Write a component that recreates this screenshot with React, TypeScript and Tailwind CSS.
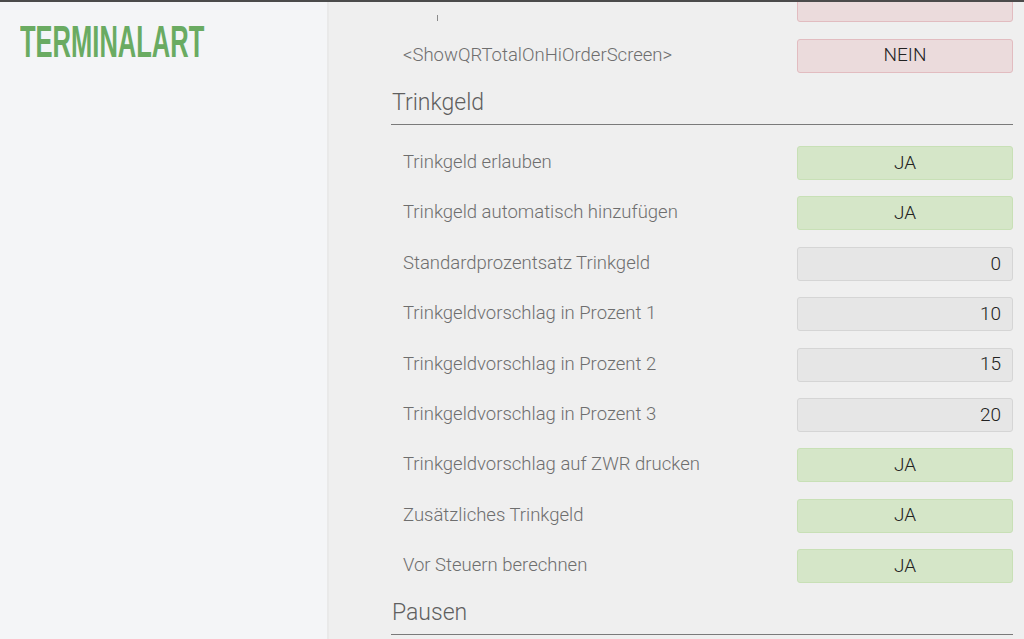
import React from "react";

type Row = { label: string; value: string; kind: "yes" | "no" | "num" };

const tipRows: Row[] = [
  { label: "Trinkgeld erlauben", value: "JA", kind: "yes" },
  { label: "Trinkgeld automatisch hinzufügen", value: "JA", kind: "yes" },
  { label: "Standardprozentsatz Trinkgeld", value: "0", kind: "num" },
  { label: "Trinkgeldvorschlag in Prozent 1", value: "10", kind: "num" },
  { label: "Trinkgeldvorschlag in Prozent 2", value: "15", kind: "num" },
  { label: "Trinkgeldvorschlag in Prozent 3", value: "20", kind: "num" },
  { label: "Trinkgeldvorschlag auf ZWR drucken", value: "JA", kind: "yes" },
  { label: "Zusätzliches Trinkgeld", value: "JA", kind: "yes" },
  { label: "Vor Steuern berechnen", value: "JA", kind: "yes" },
];

function ValueBox({ value, kind }: { value: string; kind: Row["kind"] }) {
  const tone =
    kind === "yes"
      ? "bg-[#d5e6c8] border-[#c8e0b6] justify-center"
      : kind === "no"
        ? "bg-[#ebdbdc] border-[#e2bcc0] justify-center"
        : "bg-[#e6e6e6] border-[#d5d5d5] justify-end pr-[11px]";
  return (
    <div
      className={`flex h-[34px] w-[216px] shrink-0 items-center rounded-[3px] border text-[19px] font-light text-[#222] ${tone}`}
    >
      {value}
    </div>
  );
}

function SettingRow({ label, value, kind }: Row) {
  return (
    <div className="flex h-[50.4px] items-center justify-between pl-[12px]">
      <span className="text-[18.5px] font-light text-[#6e6e6e]">{label}</span>
      <ValueBox value={value} kind={kind} />
    </div>
  );
}

function SectionHeader({ title }: { title: string }) {
  return (
    <div className="flex h-[44px] items-end border-b-[1.5px] border-[#7a7a7a] pb-[6px] pl-[1px]">
      <span className="text-[23px] leading-[30px] font-light text-[#5f5f5f]">{title}</span>
    </div>
  );
}

export default function App() {
  return (
    <div
      className="flex h-[639px] w-[1024px] overflow-hidden border-t-2 border-[#4b4b4b] bg-[#efefef]"
      style={{ fontFamily: "Roboto, 'Noto Sans', sans-serif" }}
    >
      <aside className="w-[327px] shrink-0 bg-[#f4f5f7] pl-[20px] pt-[18px]">
        <div
          className="origin-left scale-x-[0.58] text-[44px] font-bold leading-[44px] whitespace-nowrap text-[#6aab62]"
          style={{ fontFamily: "'Liberation Sans', Arial, sans-serif" }}
        >
          TERMINALART
        </div>
      </aside>
      <div className="w-[2px] shrink-0 bg-[#e9e9e9]" />

      <main className="flex-1 pl-[62px] pr-[11px]">
        <div className="-mt-[22px]">
          <div className="flex h-[50.4px] items-center justify-between pl-[12px]">
            <div className="mt-[26px] ml-[34px] h-[6px] w-[1px] bg-[#8a8a8a]" />
            <ValueBox value="" kind="no" />
          </div>
          <SettingRow label="<ShowQRTotalOnHiOrderScreen>" value="NEIN" kind="no" />
        </div>

        <SectionHeader title="Trinkgeld" />
        <div className="mt-[13px]">
          {tipRows.map((r) => (
            <SettingRow key={r.label} {...r} />
          ))}
        </div>

        <SectionHeader title="Pausen" />
      </main>
    </div>
  );
}
